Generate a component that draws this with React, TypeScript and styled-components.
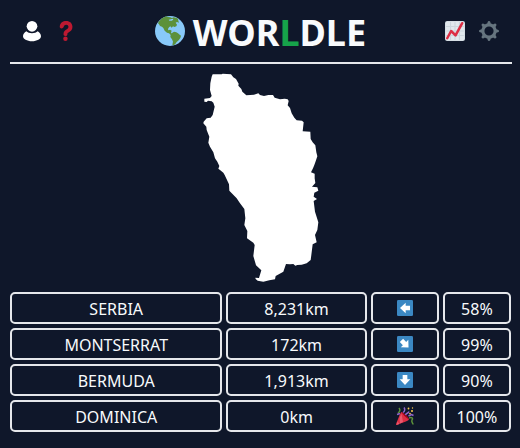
import React from "react";
import styled, { createGlobalStyle } from "styled-components";

const GlobalStyle = createGlobalStyle`
  *, *::before, *::after { box-sizing: border-box; }
  body {
    margin: 0;
    background: #0f172a;
    color: #f8fafc;
    font-family: "Segoe UI", "Noto Sans", sans-serif;
    font-size: 16px;
    line-height: 24px;
  }
`;

const Page = styled.div`
  display: flex;
  flex-direction: column;
  padding: 0 8px 16px 10px;
`;

const Header = styled.header`
  display: flex;
  align-items: center;
  height: 64px;
  padding: 0 9px 0 8px;
  border-bottom: 2px solid #e5e7eb;
`;

const Actions = styled.div`
  display: flex;
  gap: 6px;
`;

const IconButton = styled.button`
  display: flex;
  align-items: center;
  justify-content: center;
  width: 28px;
  height: 32px;
  padding: 0;
  border: 0;
  background: transparent;
  cursor: pointer;
`;

const Title = styled.h1`
  display: flex;
  flex: 1;
  align-items: center;
  justify-content: center;
  gap: 8px;
  margin: 0;
  font-size: 36px;
  font-weight: 700;
  line-height: 40px;
`;

const Word = styled.span`
  padding-top: 4px;
`;

const Accent = styled.span`
  color: #16a34a;
`;

const Shape = styled.figure`
  display: flex;
  justify-content: center;
  margin: 0;
  padding: 8px 0;
`;

const Guesses = styled.table`
  display: block;
  padding-right: 1px;
`;

const GuessList = styled.tbody`
  display: grid;
  gap: 4px;
`;

const GuessRow = styled.tr`
  display: grid;
  grid-template-columns: repeat(7, 1fr);
  gap: 4px;
`;

const Cell = styled.td<{ $span?: number }>`
  display: flex;
  grid-column: span ${(p) => p.$span ?? 1};
  align-items: center;
  justify-content: center;
  height: 32px;
  padding: 2px 0 0;
  border: 2px solid #e5e7eb;
  border-radius: 5px;
  text-transform: uppercase;
`;

const DistanceCell = styled(Cell)`
  text-transform: none;
`;

const IconCell = styled(Cell)`
  padding: 0;
`;

const UserIcon = () => (
  <svg width="20" height="22" viewBox="0 0 60 66" fill="#fff" aria-hidden="true">
    <circle cx="30" cy="19" r="16" />
    <path d="M13 34C20 42 40 42 47 34C53 37 57 43 57 49C57 57 45 64 30 64C15 64 3 57 3 49C3 43 7 37 13 34Z" />
  </svg>
);

const QuestionIcon = () => (
  <svg width="20" height="20" viewBox="0 0 36 36" fill="#be1931" aria-hidden="true">
    <path d="M17 27C14.4 27 13.5 25.6 13.5 23.5C13.5 18.6 16.6 16.2 19.4 14.8C21.6 13.6 22.4 12.4 22.4 10.5C22.4 8 20.6 6.6 18.3 6.6C15.6 6.6 14.7 8.2 14.1 10C13.5 12.2 12.2 13.3 10 13.3C7.8 13.3 6.4 11.6 6.8 9.3C7.6 3.4 12.2 0 18.4 0C25 0 29.6 4.3 29.6 10.4C29.6 15.8 26.8 18.4 23.2 20.2C21.2 21.2 20.5 22 20.5 23.8C20.5 25.8 19.4 27 17 27Z" />
    <circle cx="17" cy="32" r="4" />
  </svg>
);

const GlobeIcon = () => (
  <svg width="30" height="30" viewBox="0 0 90 90" aria-hidden="true">
    <circle cx="45" cy="45" r="45" fill="#88c9f9" />
    <path
      fill="#5c913b"
      d="M11 17Q20 5 34 1L39 3L46 4L51 6L56 4L63 5L69 8L70 14L72 20L66 18L62 20L66 26L64 31L58 33L54 31L50 35L46 31L42 34L39 39L40 43L45 41L50 44L48 50L52 54L54 59L48 58L42 52L36 50L29 44L25 36L21 32L15 30L12 25L9 22Z"
    />
    <path
      fill="#5c913b"
      d="M51 51L57 47L64 49L69 52L74 56L78 59L76 66L71 73L65 78L61 84L56 88L52 86L54 77L51 70L46 63L47 56Z"
    />
    <path fill="#88c9f9" d="M41 11L48 10L53 8L55 11L50 14L43 14Z" />
  </svg>
);

const ChartIcon = () => (
  <svg width="20" height="20" viewBox="0 0 36 36" aria-hidden="true">
    <rect width="36" height="36" rx="4" fill="#ccd6dd" />
    <rect x="1" y="1" width="34" height="34" rx="3" fill="#e1e8ed" />
    <path
      fill="none"
      stroke="#ccd6dd"
      strokeWidth="2"
      d="M10 2V34M18 2V34M26 2V34M2 10H34M2 18H34M2 26H34"
    />
    <path
      fill="none"
      stroke="#dd2e44"
      strokeWidth="4.5"
      strokeLinecap="round"
      strokeLinejoin="round"
      d="M4 31L11 18L19 26L31 4"
    />
  </svg>
);

const GearIcon = () => (
  <svg width="20" height="20" viewBox="0 0 36 36" aria-hidden="true">
    <circle cx="18" cy="18" r="11" fill="none" stroke="#66757f" strokeWidth="5.5" />
    <g fill="#66757f">
      {[0, 45, 90, 135, 180, 225, 270, 315].map((angle) => (
        <path
          key={angle}
          transform={`rotate(${angle} 18 18)`}
          d="M14.5 6.5L15.6 2Q16 0 18 0Q20 0 20.4 2L21.5 6.5Z"
        />
      ))}
    </g>
  </svg>
);

const ArrowIcon = ({ angle }: { angle: number }) => (
  <svg width="16" height="16" viewBox="0 0 48 48" aria-hidden="true">
    <rect width="48" height="48" rx="4" fill="#3b88c3" />
    <path
      fill="#fff"
      transform={`rotate(${angle} 24 24)`}
      d="M9 24L26 8V17H39V31H26V40Z"
    />
  </svg>
);

const PartyIcon = () => (
  <svg width="18" height="18" viewBox="0 0 36 36" aria-hidden="true">
    <path fill="#dd2e44" d="M11 10C15 12 24 19 26 25C26 27 7 34 1 36C0 36 0 35 0 34C3 27 9 10 11 10Z" />
    <path fill="#ea596e" d="M11 14L14 30L8 33L7 22ZM3 29L7 34L1 36Z" />
    <path fill="#a0041e" d="M11 10C16 12 24 19 26 25C22 23 14 16 11 10Z" />
    <path fill="none" stroke="#5c913b" strokeWidth="3" d="M4 12C8 9 9 6 6 2M26 22C31 20 35 22 32 26C30 30 34 32 34 35" />
    <path fill="none" stroke="#9266cc" strokeWidth="3" d="M14 11C17 9 19 5 16 1M2 15L8 13M19 16C21 11 24 14 26 9M25 18L31 15L35 17" />
    <g fill="#ffcc4d">
      <circle cx="25" cy="3" r="1.8" />
      <circle cx="32" cy="8" r="2" />
      <circle cx="28" cy="13" r="1.7" />
      <circle cx="33" cy="2" r="1.4" />
    </g>
  </svg>
);

const CountryShape = () => (
  <svg width="120" height="212" viewBox="33 21 360 636" fill="#fff" role="img" aria-label="Country outline">
    <path d="M68 28L95 28L98 26L123 28L130 37L138 42L146 56L145 62L154 72L157 80L169 91L192 89L205 85L210 90L222 93L235 90L249 90L254 98L270 103L284 101L293 103L296 108L293 121L300 129L305 145L313 158L320 166L336 167L341 172L338 199L361 200L362 222L368 232L376 241L379 262L382 274L377 289L373 300L369 310L363 322L374 326L374 340L376 354L366 365L382 367L385 377L373 383L371 395L381 402L371 408L375 440L385 472L382 495L375 510L380 532L368 538L364 570L362 585L350 595L335 599L322 600L316 602L310 597L300 598L288 597L280 620L257 633L255 643L238 646L220 650L203 647L197 642L196 638L207 639L214 616L198 601L190 573L194 540L190 533L171 520L172 498L163 480L166 460L163 432L150 415L140 400L118 377L117 358L104 330L100 323L90 315L85 311L88 303L82 290L75 280L70 262L60 245L55 233L58 215L50 195L49 185L40 175L41 170L50 160L62 158L68 150L74 125L70 113L65 109L54 107L50 111L43 110L43 101L60 99L65 93L60 75L61 55L65 35Z" />
  </svg>
);

type Guess = { country: string; distance: string; angle?: number; direction: string; proximity: string };

const guesses: Guess[] = [
  { country: "Serbia", distance: "8,231km", angle: 0, direction: "West", proximity: "58%" },
  { country: "Montserrat", distance: "172km", angle: 225, direction: "Southeast", proximity: "99%" },
  { country: "Bermuda", distance: "1,913km", angle: 270, direction: "South", proximity: "90%" },
  { country: "Dominica", distance: "0km", direction: "Correct", proximity: "100%" },
];

export default function App() {
  return (
    <Page>
      <GlobalStyle />
      <Header>
        <Actions>
          <IconButton type="button" aria-label="Profile"><UserIcon /></IconButton>
          <IconButton type="button" aria-label="How to play"><QuestionIcon /></IconButton>
        </Actions>
        <Title>
          <GlobeIcon />
          <Word>WOR<Accent>L</Accent>DLE</Word>
        </Title>
        <Actions>
          <IconButton type="button" aria-label="Statistics"><ChartIcon /></IconButton>
          <IconButton type="button" aria-label="Settings"><GearIcon /></IconButton>
        </Actions>
      </Header>
      <main>
        <Shape><CountryShape /></Shape>
        <Guesses aria-label="Guesses">
          <GuessList>
            {guesses.map((g) => (
              <GuessRow key={g.country}>
                <Cell $span={3}>{g.country}</Cell>
                <DistanceCell $span={2}>{g.distance}</DistanceCell>
                <IconCell aria-label={g.direction}>
                  {g.angle === undefined ? <PartyIcon /> : <ArrowIcon angle={g.angle} />}
                </IconCell>
                <Cell>{g.proximity}</Cell>
              </GuessRow>
            ))}
          </GuessList>
        </Guesses>
      </main>
    </Page>
  );
}
